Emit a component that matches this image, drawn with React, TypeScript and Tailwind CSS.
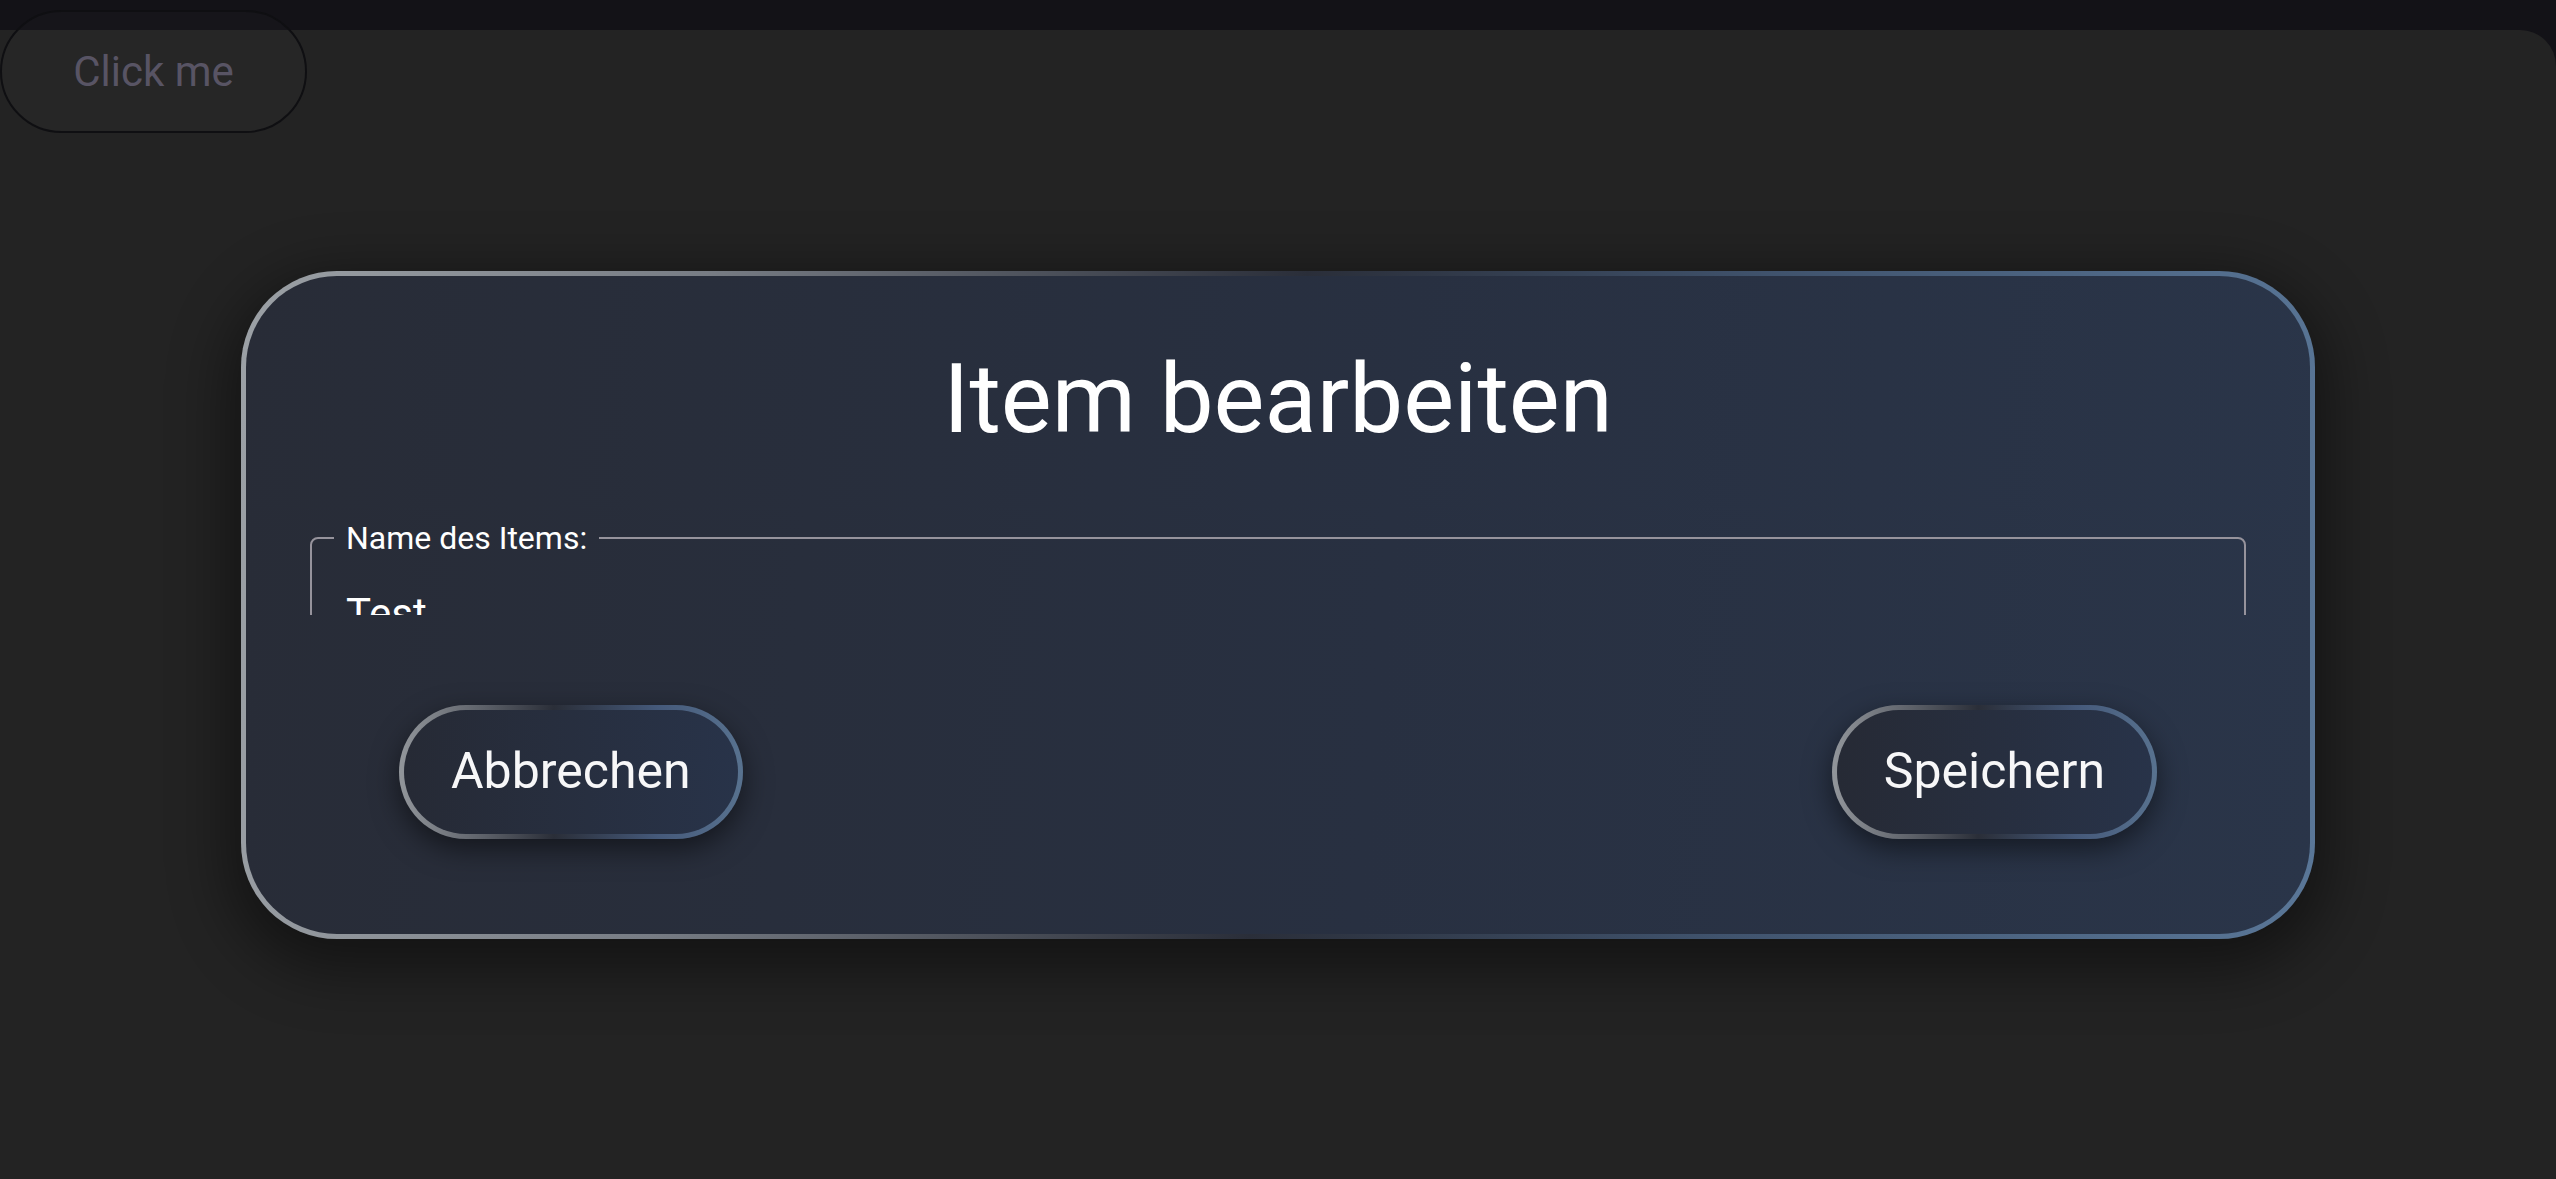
export default function App() {
  return (
    <div className="relative flex h-screen w-full flex-col overflow-hidden bg-[#131217] font-[Roboto,'Noto_Sans',sans-serif]">
      <div className="h-[30px] shrink-0" />
      <main className="relative flex flex-1 items-center justify-center rounded-tr-[36px] bg-[#232323]">
        <div className="flex w-[2074px] flex-col rounded-[96px] border-[5px] border-transparent shadow-[0_18px_60px_12px_rgba(0,0,0,0.45)] [background:linear-gradient(95deg,#282c37,#283041_55%,#2a3549)_padding-box,linear-gradient(95deg,#9ca1a6,#777c84_22%,#2a2e39_50%,#40536d_72%,#5a7798)_border-box]">
          <h1 className="pt-[67px] text-center text-[96px] leading-[112px] font-normal text-white">
            Item bearbeiten
          </h1>
          <div className="mt-[65px] h-[95px] overflow-hidden px-[64px]">
            <fieldset className="rounded-lg border-2 border-[#96939c] px-[22px] pb-6">
              <legend className="px-3 text-[32px] leading-[37px] text-white">Name des Items:</legend>
              <div className="mt-[33px] px-3 text-[42px] leading-[48px] text-white">Test</div>
            </fieldset>
          </div>
          <div className="mt-[90px] flex justify-between px-[153px] pb-[95px]">
            <button className="flex h-[134px] items-center rounded-full border-[5px] border-transparent px-[47px] text-[50px] text-[#f7f7f8] shadow-[0_10px_28px_rgba(0,0,0,0.5)] [background:linear-gradient(90deg,#262a35,#283349)_padding-box,linear-gradient(90deg,#92969b,#5c6068_25%,#2a2e38_45%,#45597a_75%,#58728f)_border-box]">
              Abbrechen
            </button>
            <button className="flex h-[134px] items-center rounded-full border-[5px] border-transparent px-[47px] text-[50px] text-[#f7f7f8] shadow-[0_10px_28px_rgba(0,0,0,0.5)] [background:linear-gradient(90deg,#262a35,#283349)_padding-box,linear-gradient(90deg,#92969b,#5c6068_25%,#2a2e38_45%,#45597a_75%,#58728f)_border-box]">
              Speichern
            </button>
          </div>
        </div>
      </main>
      <button className="absolute left-0 top-[10px] flex h-[123px] w-[307px] items-center justify-center rounded-full border-2 border-[#0f0f12] bg-white/[0.015] text-[42px] text-[#585464]">
        Click me
      </button>
    </div>
  );
}
